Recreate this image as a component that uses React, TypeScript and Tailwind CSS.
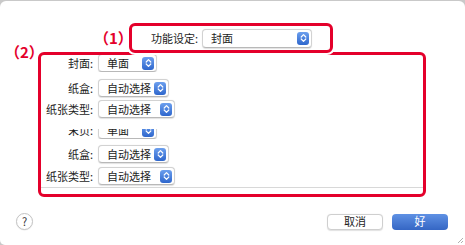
import React from "react";

const FONT = "font-['Noto_Sans_CJK_SC','Noto_Sans',sans-serif]";

function Stepper() {
  return (
    <span className="flex h-[13px] w-[12px] shrink-0 items-center justify-center rounded-[3px] bg-gradient-to-b from-[#6c9fee] to-[#2e66cc]">
      <svg width="7" height="10" viewBox="0 0 7 10">
        <path
          d="M1.2 4 L3.5 1.7 L5.8 4 M1.2 6 L3.5 8.3 L5.8 6"
          stroke="white"
          strokeWidth="1.2"
          fill="none"
          strokeLinecap="round"
          strokeLinejoin="round"
        />
      </svg>
    </span>
  );
}

function Popup({ text, className }: { text: string; className: string }) {
  return (
    <div
      className={
        "flex h-[18px] shrink-0 items-center justify-between rounded-[4px] border border-[#d2d2d2] border-b-[#b8b8b8] bg-white pl-[8px] pr-[2px] shadow-[0_0.5px_1px_rgba(0,0,0,0.12)] " +
        className
      }
    >
      <span className="leading-none text-[#1c1c1c]">{text}</span>
      <Stepper />
    </div>
  );
}

function Row({ label, value, w }: { label: string; value: string; w: string }) {
  return (
    <div className="flex h-[18px] items-center">
      <span className="w-[52px] shrink-0 text-right leading-none text-[#1c1c1c]">{label}</span>
      <Popup text={value} className={"ml-[5px] " + w} />
    </div>
  );
}

export default function App() {
  return (
    <div className={"relative h-[245px] w-[465px] bg-[#c9c9c9] pt-px text-[11px] " + FONT}>
      <div className="flex h-full flex-col rounded-t-[6px] rounded-bl-[5px] bg-white">
        {/* header */}
        <div className="relative z-10 flex h-[51px] items-start pl-[5px] pt-[22px]">
          <span className="mt-[21px] w-[30px] shrink-0 whitespace-nowrap text-[15px] font-bold leading-[16px] text-[#e4002b]">
            （2）
          </span>
          <span className="ml-[59px] mt-[7px] w-[30px] shrink-0 whitespace-nowrap text-[15px] font-bold leading-[16px] text-[#e4002b]">
            （1）
          </span>
          <div className="ml-[5px] flex h-[30px] w-[204px] shrink-0 items-center rounded-[6px] border-[3px] border-[#e4002b] bg-white pl-[19px] shadow-[0_0_0_2px_white]">
            <span className="leading-none text-[#1c1c1c]">功能设定:</span>
            <Popup text="封面" className="ml-[4px] h-[19px] w-[110px]" />
          </div>
        </div>

        {/* box 2 */}
        <div className="ml-[38px] flex h-[145px] w-[388px] flex-col rounded-[6px] border-[3px] border-[#e4002b]">
          <div className="h-[17px] overflow-hidden">
            <div className="-mt-[1px]">
              <Row label="封面:" value="单面" w="w-[59px]" />
            </div>
          </div>
          <div className="mt-[7px]">
            <Row label="纸盒:" value="自动选择" w="w-[71px]" />
          </div>
          <div className="mt-[3px]">
            <Row label="纸张类型:" value="自动选择" w="w-[77px]" />
          </div>
          <div className="mt-[11px] h-[10px] overflow-hidden">
            <div className="-mt-[8px]">
              <Row label="末页:" value="单面" w="w-[59px]" />
            </div>
          </div>
          <div className="mt-[6px]">
            <Row label="纸盒:" value="自动选择" w="w-[71px]" />
          </div>
          <div className="mt-[4px]">
            <Row label="纸张类型:" value="自动选择" w="w-[77px]" />
          </div>
          <div className="mt-[2px] h-px bg-[#d8d8d8]" />
        </div>

        {/* bottom buttons */}
        <div className="mt-[16px] flex h-[17px] items-center pl-[16px] pr-[17px]">
          <div className="flex h-[17px] w-[17px] items-center justify-center rounded-full border border-[#c4c4c4] bg-white text-[11px] leading-none text-[#333] shadow-[0_0.5px_1px_rgba(0,0,0,0.1)]">
            ?
          </div>
          <div className="ml-auto flex h-[16px] w-[56px] items-center justify-center rounded-[4px] border border-[#cfcfcf] bg-white leading-none text-[#1c1c1c] shadow-[0_0.5px_1px_rgba(0,0,0,0.12)]">
            取消
          </div>
          <div className="ml-[9px] flex h-[16px] w-[56px] items-center justify-center rounded-[4px] bg-gradient-to-b from-[#5f91e4] to-[#3566c4] leading-none text-white">
            好
          </div>
        </div>
      </div>
      <svg className="absolute bottom-[2px] right-[2px]" width="6" height="6" viewBox="0 0 6 6">
        <path d="M6 1 L1 6 M6 4 L4 6" stroke="#b0b0b0" strokeWidth="1" />
      </svg>
    </div>
  );
}
